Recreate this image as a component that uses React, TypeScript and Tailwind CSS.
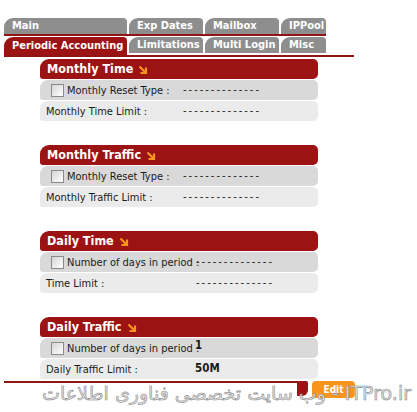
import React from "react";

type Row = { label: string; value: string; check?: boolean; bold?: boolean };
type Section = { title: string; valueAt: string; rows: Row[] };

const dashes = "--------------";

const sections: Section[] = [
  {
    title: "Monthly Time",
    valueAt: "w-[143px]",
    rows: [
      { label: "Monthly Reset Type :", value: dashes, check: true },
      { label: "Monthly Time Limit :", value: dashes },
    ],
  },
  {
    title: "Monthly Traffic",
    valueAt: "w-[143px]",
    rows: [
      { label: "Monthly Reset Type :", value: dashes, check: true },
      { label: "Monthly Traffic Limit :", value: dashes },
    ],
  },
  {
    title: "Daily Time",
    valueAt: "w-[156px]",
    rows: [
      { label: "Number of days in period :", value: dashes, check: true },
      { label: "Time Limit :", value: dashes },
    ],
  },
  {
    title: "Daily Traffic",
    valueAt: "w-[155px]",
    rows: [
      { label: "Number of days in period :", value: "1", check: true, bold: true },
      { label: "Daily Traffic Limit :", value: "50M", bold: true },
    ],
  },
];

const topTabs = ["Main", "Exp Dates", "Mailbox", "IPPool"];
const bottomTabs = ["Periodic Accounting", "Limitations", "Multi Login", "Misc"];
const tabWidths = ["w-[123px]", "w-[74px]", "w-[74px]", "w-[45px]"];

function Arrow() {
  return (
    <svg width="10" height="10" viewBox="0 0 10 10" className="ml-[5px] mt-[2px]">
      <path d="M1.5 1.5 L8 8 M8 2.5 V8 H2.5" stroke="#f7941d" strokeWidth="2.2" fill="none" />
    </svg>
  );
}

function Tab({ label, width, active }: { label: string; width: string; active?: boolean }) {
  return (
    <div
      className={`${width} flex items-center pl-[8px] rounded-tl-[9px] rounded-tr-[4px] text-[11px] font-bold text-white ${
        active ? "h-[18px] bg-[#9b1313]" : "h-[16px] bg-[#8e8e8e]"
      }`}
    >
      {label}
    </div>
  );
}

export default function App() {
  return (
    <div
      className="relative w-[417px] h-[412px] overflow-hidden bg-white text-[#1a1a1a]"
      style={{ fontFamily: "Tahoma, 'DejaVu Sans Condensed', 'DejaVu Sans', sans-serif" }}
    >
      {/* Tabs */}
      <div className="pt-[18px] pl-[4px]">
        <div className="flex gap-[2px]">
          {topTabs.map((t, i) => (
            <Tab key={t} label={t} width={tabWidths[i]} />
          ))}
        </div>
        <div className="h-[2px] w-[322px] bg-[#8f1414]" />
        <div className="flex gap-[2px] mt-[1px]">
          {bottomTabs.map((t, i) => (
            <Tab key={t} label={t} width={tabWidths[i]} active={i === 0} />
          ))}
        </div>
        <div className="h-[2px] w-[350px] bg-[#8f1414]" />
      </div>

      {/* Sections */}
      <div className="ml-[40px] w-[278px] mt-[2px] flex flex-col gap-[24px]">
        {sections.map((s) => (
          <div key={s.title} className="flex flex-col gap-[1px]">
            <div className="h-[20px] flex items-center pl-[7px] bg-[#9b1313] rounded-tl-[9px] rounded-bl-[3px] rounded-r-[5px] text-[12.5px] font-bold text-white">
              {s.title}
              <Arrow />
            </div>
            {s.rows.map((r, i) => (
              <div
                key={r.label}
                className={`h-[20px] flex items-center text-[11px] rounded-tl-[8px] rounded-bl-[3px] rounded-r-[5px] ${
                  i === 0 ? "bg-[#d9d9d9]" : "bg-[#ebebeb]"
                }`}
              >
                <div className={`${s.valueAt} shrink-0 flex items-center ${r.check ? "pl-[11px]" : "pl-[6px]"}`}>
                  {r.check && (
                    <span className="shrink-0 w-[13px] h-[13px] mr-[3px] border border-[#8a8a8a] bg-gradient-to-br from-[#d6d6d6] to-white" />
                  )}
                  <span className="whitespace-nowrap pt-[2px]">{r.label}</span>
                </div>
                <span
                  className={`whitespace-nowrap ${r.bold ? "font-bold text-[11.5px]" : "text-[11px] tracking-[2px]"} ${
                    r.bold && i === 0 ? "-mt-[5px]" : ""
                  }`}
                >
                  {r.value}
                </span>
              </div>
            ))}
          </div>
        ))}
      </div>

      {/* Bottom bar */}
      <div className="mt-[2px] ml-[4px] flex items-start">
        <div className="h-[2px] w-[293px] bg-[#8f1414]" />
        <div className="h-[15px] w-[11px] bg-[#9b1313] rounded-br-[6px] rounded-tr-[2px]" />
        <div className="ml-[4px] h-[17px] w-[43px] bg-[#f7941d] rounded-[4px] flex items-center justify-center text-[10px] font-bold text-white">
          Edit
        </div>
      </div>

      {/* Watermark */}
      <div
        dir="rtl"
        className="absolute left-[4px] right-[6px] top-[381px] text-right whitespace-nowrap text-[19px] leading-[24px] text-[#e4e4e4] [-webkit-text-stroke:0.6px_#8c8c8c]"
        style={{ fontFamily: "'DejaVu Sans', 'Noto Sans', sans-serif" }}
      >
        ITPro.ir - وب سایت تخصصی فناوری اطلاعات
      </div>
    </div>
  );
}
